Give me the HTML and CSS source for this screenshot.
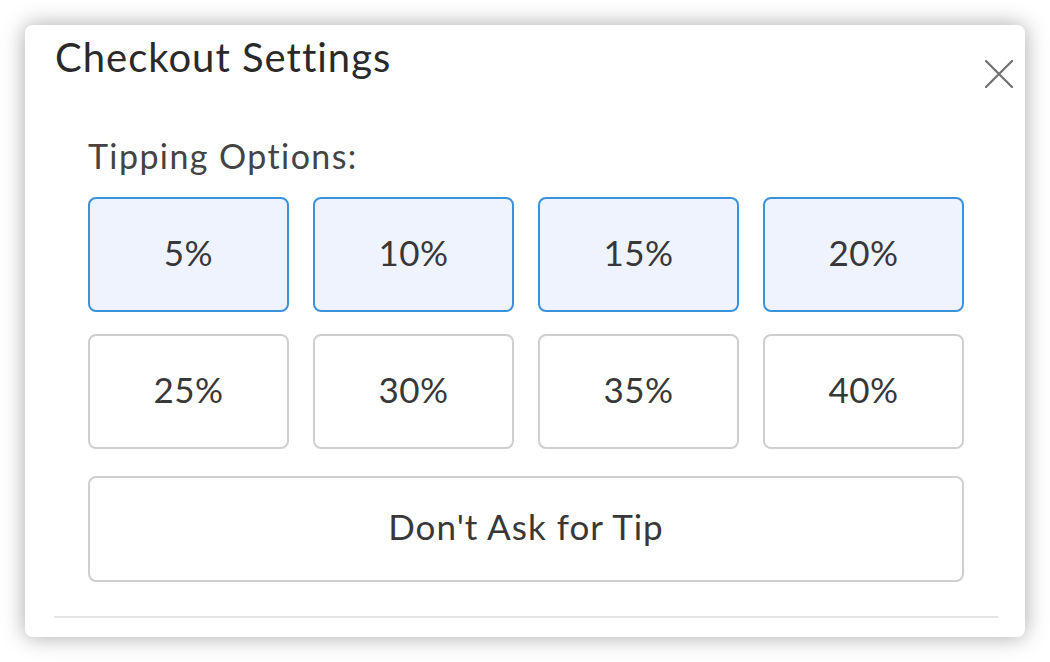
FILE: index.html
```html
<!DOCTYPE html>
<html lang="en">
<head>
<meta charset="utf-8">
<title>Checkout Settings</title>
<link rel="stylesheet" href="styles.css">
</head>
<body>
<div class="modal">
  <div class="modal-header">
    <h1 class="modal-title">Checkout Settings</h1>
    <button class="close-btn" aria-label="Close">
      <svg width="28" height="28" viewBox="0 0 28 28"><path d="M1 1 L27 27 M27 1 L1 27" stroke="#707070" stroke-width="2.2" stroke-linecap="round" fill="none"/></svg>
    </button>
  </div>
  <div class="modal-body">
    <div class="section-label">Tipping Options:</div>
    <div class="tip-grid">
      <button class="tip selected">5%</button>
      <button class="tip selected">10%</button>
      <button class="tip selected">15%</button>
      <button class="tip selected">20%</button>
      <button class="tip">25%</button>
      <button class="tip">30%</button>
      <button class="tip">35%</button>
      <button class="tip">40%</button>
    </div>
    <button class="tip no-tip">Don't Ask for Tip</button>
  </div>
  <div class="divider"></div>
</div>
</body>
</html>
```
FILE: styles.css
```css
html, body {
  margin: 0;
  padding: 0;
  background: #ffffff;
}
body {
  font-family: "Lato", "Open Sans", sans-serif;
  color: #333333;
}
.modal {
  margin: 25px;
  width: 1000px;
  height: 612px;
  box-sizing: border-box;
  background: #ffffff;
  border-radius: 8px;
  box-shadow: 0 0 22px rgba(0, 0, 0, 0.35);
  display: flex;
  flex-direction: column;
}
.modal-header {
  display: flex;
  justify-content: space-between;
  align-items: flex-start;
  padding: 0 12px 0 30px;
}
.modal-title {
  margin: 0;
  padding-top: 12px;
  font-size: 40px;
  line-height: 40px;
  font-weight: 400;
  letter-spacing: 1px;
  color: #2a2a2a;
}
.close-btn {
  margin-top: 35px;
  padding: 0;
  border: 0;
  background: none;
  width: 28px;
  height: 28px;
  display: flex;
}
.modal-body {
  padding: 0 61px 0 63px;
  display: flex;
  flex-direction: column;
}
.section-label {
  margin-top: 48px;
  font-size: 34px;
  line-height: 40px;
  letter-spacing: 1.4px;
  color: #444444;
}
.tip-grid {
  margin-top: 21px;
  display: grid;
  grid-template-columns: repeat(4, 201px);
  grid-auto-rows: 115px;
  column-gap: 24px;
  row-gap: 22px;
}
.tip {
  font-family: "Lato", "Open Sans", sans-serif;
  font-size: 35px;
  letter-spacing: 0.5px;
  color: #383838;
  background: #ffffff;
  border: 2px solid #cfcfcf;
  border-radius: 8px;
  padding: 0 0 6px 0;
  display: flex;
  align-items: center;
  justify-content: center;
}
.tip.selected {
  background: #eef3fe;
  border-color: #3a92dc;
}
.no-tip {
  margin-top: 27px;
  height: 106px;
  width: 876px;
  letter-spacing: 1px;
}
.divider {
  margin: 34px 27px 0 29px;
  height: 2px;
  background: #e6e6e6;
}
```
